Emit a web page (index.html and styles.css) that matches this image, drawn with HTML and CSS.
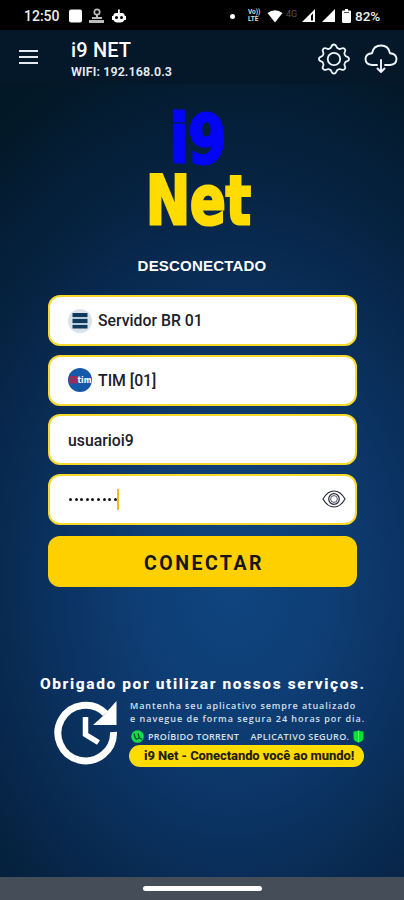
FILE: index.html
```
<!DOCTYPE html>
<html lang="pt-BR">
<head>
<meta charset="utf-8">
<meta name="viewport" content="width=device-width, initial-scale=1">
<title>i9 NET</title>
<link rel="stylesheet" href="styles.css">
</head>
<body>
<div class="screen">
  <div class="status">
    <span class="clock">12:50</span>
    <svg class="status-left" width="60" height="18" viewBox="0 0 60 18" fill="#fff">
      <rect x="1" y="2.500" width="13" height="13" rx="2"/>
      <g fill="#bbb"><circle cx="29" cy="5" r="2.700" fill="none" stroke="#bbb" stroke-width="1.700"/><path d="M28 7h2v4h-2zM24 10h10v2H24zM21 13h15v3H21z"/></g>
      <path d="M50 2.500h1.800v3.500h2.500q2.200 0 2.500 3h1.200v4h-1.600q-1 2.500-4 2.500h-3q-3 0-4-2.500H44V9h1.200q.5-3 2.800-3h2z"/>
      <circle cx="48.500" cy="10.500" r="1.500" fill="#000"/><circle cx="53.500" cy="10.500" r="1.500" fill="#000"/>
    </svg>
    <span class="dot"></span>
    <span class="lte"><span>Vo))</span><span>LTE</span></span>
    <svg class="wifi" width="16" height="13" viewBox="0 0 16 13"><path d="M.5 3Q8-2.500 15.500 3L8 12.500z" fill="#fff"/></svg>
    <span class="net">4G</span>
    <svg class="signals" width="37" height="14" viewBox="0 0 37 14"><path d="M1 13 14 0v13zM21 13 34 0v13z" fill="#fff"/><path d="M10 6.500 12 4.500v7h-2z" fill="#000"/></svg>
    <svg class="battery" width="9" height="14" viewBox="0 0 9 14"><path d="M3 0h3v1.500h2q1 0 1 1v10q0 1.500-1.500 1.500h-6Q0 14 0 12.500v-10q0-1 1-1h2z" fill="#fff"/><path d="M2 3.500h5" stroke="#555"/></svg>
    <span class="percent">82%</span>
  </div>

  <header class="appbar">
    <div class="burger"><i></i><i></i><i></i></div>
    <div class="titles"><h1>i9 NET</h1><p>WIFI: 192.168.0.3</p></div>
    <svg class="gear" width="32" height="32" viewBox="0 0 32 32" fill="none" stroke="#eef4fb" stroke-width="1.900" stroke-linejoin="round">
      <g transform="translate(.6 .2) scale(.96 .93)"><path d="M13.300 3.800Q14 1.400 16 1.400t2.700 2.400q.4 1.500 2 2.100 1.500.7 2.900-.1 2.100-1.200 3.500.2t.2 3.500q-.8 1.400-.1 2.900.6 1.600 2.100 2 2.300.6 2.300 2.600t-2.300 2.600q-1.500.4-2.100 2-.7 1.500.1 2.900 1.200 2.100-.2 3.500t-3.500.2q-1.400-.8-2.900-.1-1.600.6-2 2.100-.7 2.400-2.700 2.400t-2.700-2.400q-.4-1.500-2-2.100-1.500-.7-2.900.1-2.100 1.200-3.500-.2t-.2-3.500q.8-1.400.1-2.900-.6-1.600-2.100-2Q.4 19 .4 17t2.300-2.600q1.500-.4 2.100-2 .7-1.500-.1-2.900Q3.500 7.400 4.900 6t3.500-.2q1.400.8 2.900.1 1.600-.6 2-2.100z"/>
      <circle cx="16" cy="17" r="6.500"/></g>
    </svg>
    <svg class="cloud" width="34" height="30" viewBox="0 0 34 30" fill="none" stroke="#eef4fb" stroke-width="1.900" stroke-linecap="round" stroke-linejoin="round">
      <path d="M13 21H8Q1.500 20.500 1.500 14.700 2 9.500 8 9.200 9.500 1.500 17 1.500t9 7.700q6 .3 6.500 5.500 0 5.800-6.500 6.300h-5M17 16v11.500M13.500 24.500 17 28l3.500-3.500"/>
    </svg>
  </header>

  <main class="content">
    <svg class="logo" width="110" height="120" viewBox="0 0 110 120">
      <text class="logo-top" x="22.500" y="55" textLength="57" lengthAdjust="spacingAndGlyphs">i9</text>
      <text class="logo-bottom" x="-1" y="116" textLength="105" lengthAdjust="spacingAndGlyphs">Net</text>
    </svg>
    <p class="state">DESCONECTADO</p>

    <form class="form">
      <div class="field">
        <svg width="26" height="26" viewBox="0 0 26 26"><circle cx="13" cy="13" r="12" fill="#dce3e8"/><path d="M5.500 5h15v4h-15zM5.500 11h15v4h-15zM5.500 17h15v3.500h-15z" fill="#103b5d"/><path d="M5.500 10h15M5.500 16h15" stroke="#8fb4c8" stroke-width="1"/></svg>
        <span>Servidor BR 01</span>
      </div>
      <div class="field">
        <svg width="26" height="26" viewBox="0 0 26 26"><circle cx="13" cy="13" r="12" fill="#1558a8"/><path d="M1.800 9h9v7.500h-9z" fill="#8a2f62"/><path d="M3 10.500h7M3 13h7M3 15.500h7" stroke="#a82b54"/><text class="tim" x="10.500" y="16" textLength="14" lengthAdjust="spacingAndGlyphs">tim</text></svg>
        <span>TIM [01]</span>
      </div>
      <div class="field"><span class="user">usuarioi9</span></div>
      <div class="field">
        <span class="dots"><b></b><b></b><b></b><b></b><b></b><b></b><b></b><b></b><b></b></span><span class="caret"></span>
        <svg class="eye" width="24" height="18" viewBox="0 0 24 18" fill="none" stroke="#29293d" stroke-width="1.200"><path d="M1 9Q5.500 1 12 1t11 8q-4.500 8-11 8T1 9z"/><circle cx="12" cy="9" r="5.300"/><circle cx="12" cy="9" r="3.400" stroke-width=".8"/></svg>
      </div>
      <button class="connect" type="button">CONECTAR</button>
    </form>

    <section class="promo">
      <h2>Obrigado por utilizar nossos serviços.</h2>
      <div class="promo-row">
        <svg class="refresh" width="64" height="66" viewBox="0 0 64 66" fill="none" stroke="#fff">
          <path d="M51.500 14.500A27.800 27.800 0 1 0 59.500 33" stroke-width="7"/>
          <path d="M62.500 2v24H39L49 17z" fill="#fff" stroke="none"/>
          <path d="M31.500 18v17.500l13 8" stroke-width="5.500"/>
        </svg>
        <div class="notes">
          <p class="note note-a">Mantenha seu aplicativo sempre atualizado</p>
          <p class="note note-b">e navegue de forma segura 24 horas por dia.</p>
          <div class="badges">
            <svg width="13" height="13" viewBox="0 0 13 13"><circle cx="6.500" cy="6.500" r="6.300" fill="#16dc4c"/><path d="M3 3.500 4.300 8q1.800 2.200 4-.3L7 3.500M8 7.500l3 2" stroke="#0b4a3a" stroke-width="1.200" fill="none"/></svg>
            <span class="torrent">PROÍBIDO TORRENT</span>
            <span class="secure">APLICATIVO SEGURO.</span>
            <svg width="11" height="13" viewBox="0 0 11 13"><path d="M.5 1.500Q4 1.500 5.500.3 7 1.500 10.500 1.500V8q0 3-5 4.700Q.5 11 .5 8z" fill="#00e52b"/><path d="M5.500 1v11" stroke="#54ff64"/></svg>
          </div>
          <p class="slogan">i9 Net - Conectando você ao mundo!</p>
        </div>
      </div>
    </section>
  </main>
  <div class="navbar"><span></span></div>
</div>
</body>
</html>
```
FILE: styles.css
```
* { box-sizing: border-box; margin: 0; padding: 0; }
body { font-family: Roboto, "Liberation Sans", sans-serif; background: #041427; color: #fff; }
svg { display: block; flex: none; }
.screen {
  width: 404px; height: 900px; overflow: hidden;
  display: flex; flex-direction: column;
  background: radial-gradient(ellipse 400px 560px at 58% 580px, #10457f 0%, #0e3d74 25%, #0a2f5b 50%, #062342 72%, #031827 100%);
}
.status { height: 30px; background: #000; display: flex; align-items: center; padding: 2px 0 0 24px; flex: none; }
.clock { width: 44px; font-size: 14px; font-weight: 500; color: #eee; }
.status-left { margin-right: 102px; }
.dot { width: 5px; height: 5px; border-radius: 50%; background: #fff; margin-right: 13px; }
.lte { width: 19px; display: flex; flex-direction: column; font-size: 6.500px; line-height: 7px; font-weight: 700; color: #ddd; }
.net { width: 16px; margin-left: 3px; font-size: 9px; line-height: 10px; color: #555; padding-bottom: 4px; }
.battery { margin-right: 4px; margin-left: 4px; }
.signals { margin-left: -1px; }
.percent { font-size: 13.500px; font-weight: 500; color: #eee; }

.appbar { height: 54px; flex: none; display: flex; align-items: center; background: #04182a; padding-left: 19px; }
.burger { width: 19px; display: flex; flex-direction: column; gap: 4px; }
.burger i { height: 2px; background: #e4e9ef; }
.titles { width: 247px; margin-left: 33px; padding-top: 6px; }
.titles h1 { font-size: 20px; line-height: 24px; font-weight: 500; letter-spacing: .15px; }
.titles p { font-size: 12.500px; line-height: 20px; font-weight: 600; color: #e8edf3; letter-spacing: .1px; }
.gear { margin-top: 4px; }
.cloud { margin-left: 14px; margin-top: 3px; }

.content { flex: 1; display: flex; flex-direction: column; align-items: center; padding-top: 24px; }
.logo { overflow: visible; }
.logo text { font-family: "DejaVu Sans", sans-serif; font-weight: 700; font-size: 67px; stroke-width: 3px; paint-order: stroke; }
.logo-top { fill: #0505f5; stroke: #0505f5; }
.logo-bottom { fill: #ffdb00; stroke: #ffdb00; }
.state { margin-top: 29px; font-family: "Liberation Sans", sans-serif; font-weight: 700; font-size: 15px; line-height: 18px; letter-spacing: .2px; }
.form { width: 309px; margin: 20px 0 0 1px; display: flex; flex-direction: column; gap: 8.600px; }
.field {
  height: 51px; display: flex; align-items: center; padding: 0 9px 0 18px;
  background: #fff; border: 2px solid #f6d92b; border-radius: 12px;
  color: #20202a; font-size: 15.800px; font-weight: 500;
}
.field svg:first-child { margin-left: -1px; }
.field svg + span { margin-left: 5px; }
.tim { font-family: "DejaVu Sans", sans-serif; font-weight: 700; font-size: 8px; fill: #fff; }
.user { padding-top: 1px; }
.dots { display: flex; gap: 2.600px; padding-left: 1px; }
.dots b { width: 3px; height: 3px; border-radius: 50%; background: #151515; }
.caret { width: 2px; height: 21px; background: #f5b914; }
.eye { margin-left: auto; }
.connect {
  height: 51px; margin-top: 3px; padding: 3px 0 0 3px; border: 0; border-radius: 12px; background: #ffd000; color: #15151a;
  font-family: Roboto, sans-serif; font-size: 19.500px; font-weight: 700; letter-spacing: 2.500px;
}
.promo { width: 326px; margin: 87px 0 0 2px; }
.promo h2 { font-family: Roboto, sans-serif; font-size: 15.500px; line-height: 20px; font-weight: 800; letter-spacing: 1.600px; white-space: nowrap; }
.promo-row { display: flex; margin-top: 5px; padding-left: 14px; gap: 11px; }
.notes { width: 235px; }
.note { font-family: "Open Sans", sans-serif; font-weight: 600; font-size: 9px; line-height: 13px; color: #d5e0ec; white-space: nowrap; padding-left: 1px; }
.note-a { letter-spacing: .9px; }
.note-b { letter-spacing: .98px; }
.badges { display: flex; align-items: center; height: 16px; margin-top: 3px; padding-left: 2px; font-family: "Open Sans", sans-serif; font-size: 9px; font-weight: 600; color: #d5e0ec; white-space: nowrap; }
.torrent { margin-left: 4px; width: 103px; letter-spacing: .28px; }
.secure { width: 103px; letter-spacing: .38px; }
.slogan {
  margin-top: 1px; width: 235px; height: 22px; border-radius: 11px; background: #ffdc00; padding-left: 15px;
  font-size: 13px; line-height: 22px; font-weight: 800; letter-spacing: -.08px; white-space: nowrap; color: #24200c;
}
.navbar { height: 23px; flex: none; background: #454e58; display: flex; justify-content: center; align-items: center; }
.navbar span { width: 119px; height: 5px; border-radius: 3px; background: #fff; }
```
